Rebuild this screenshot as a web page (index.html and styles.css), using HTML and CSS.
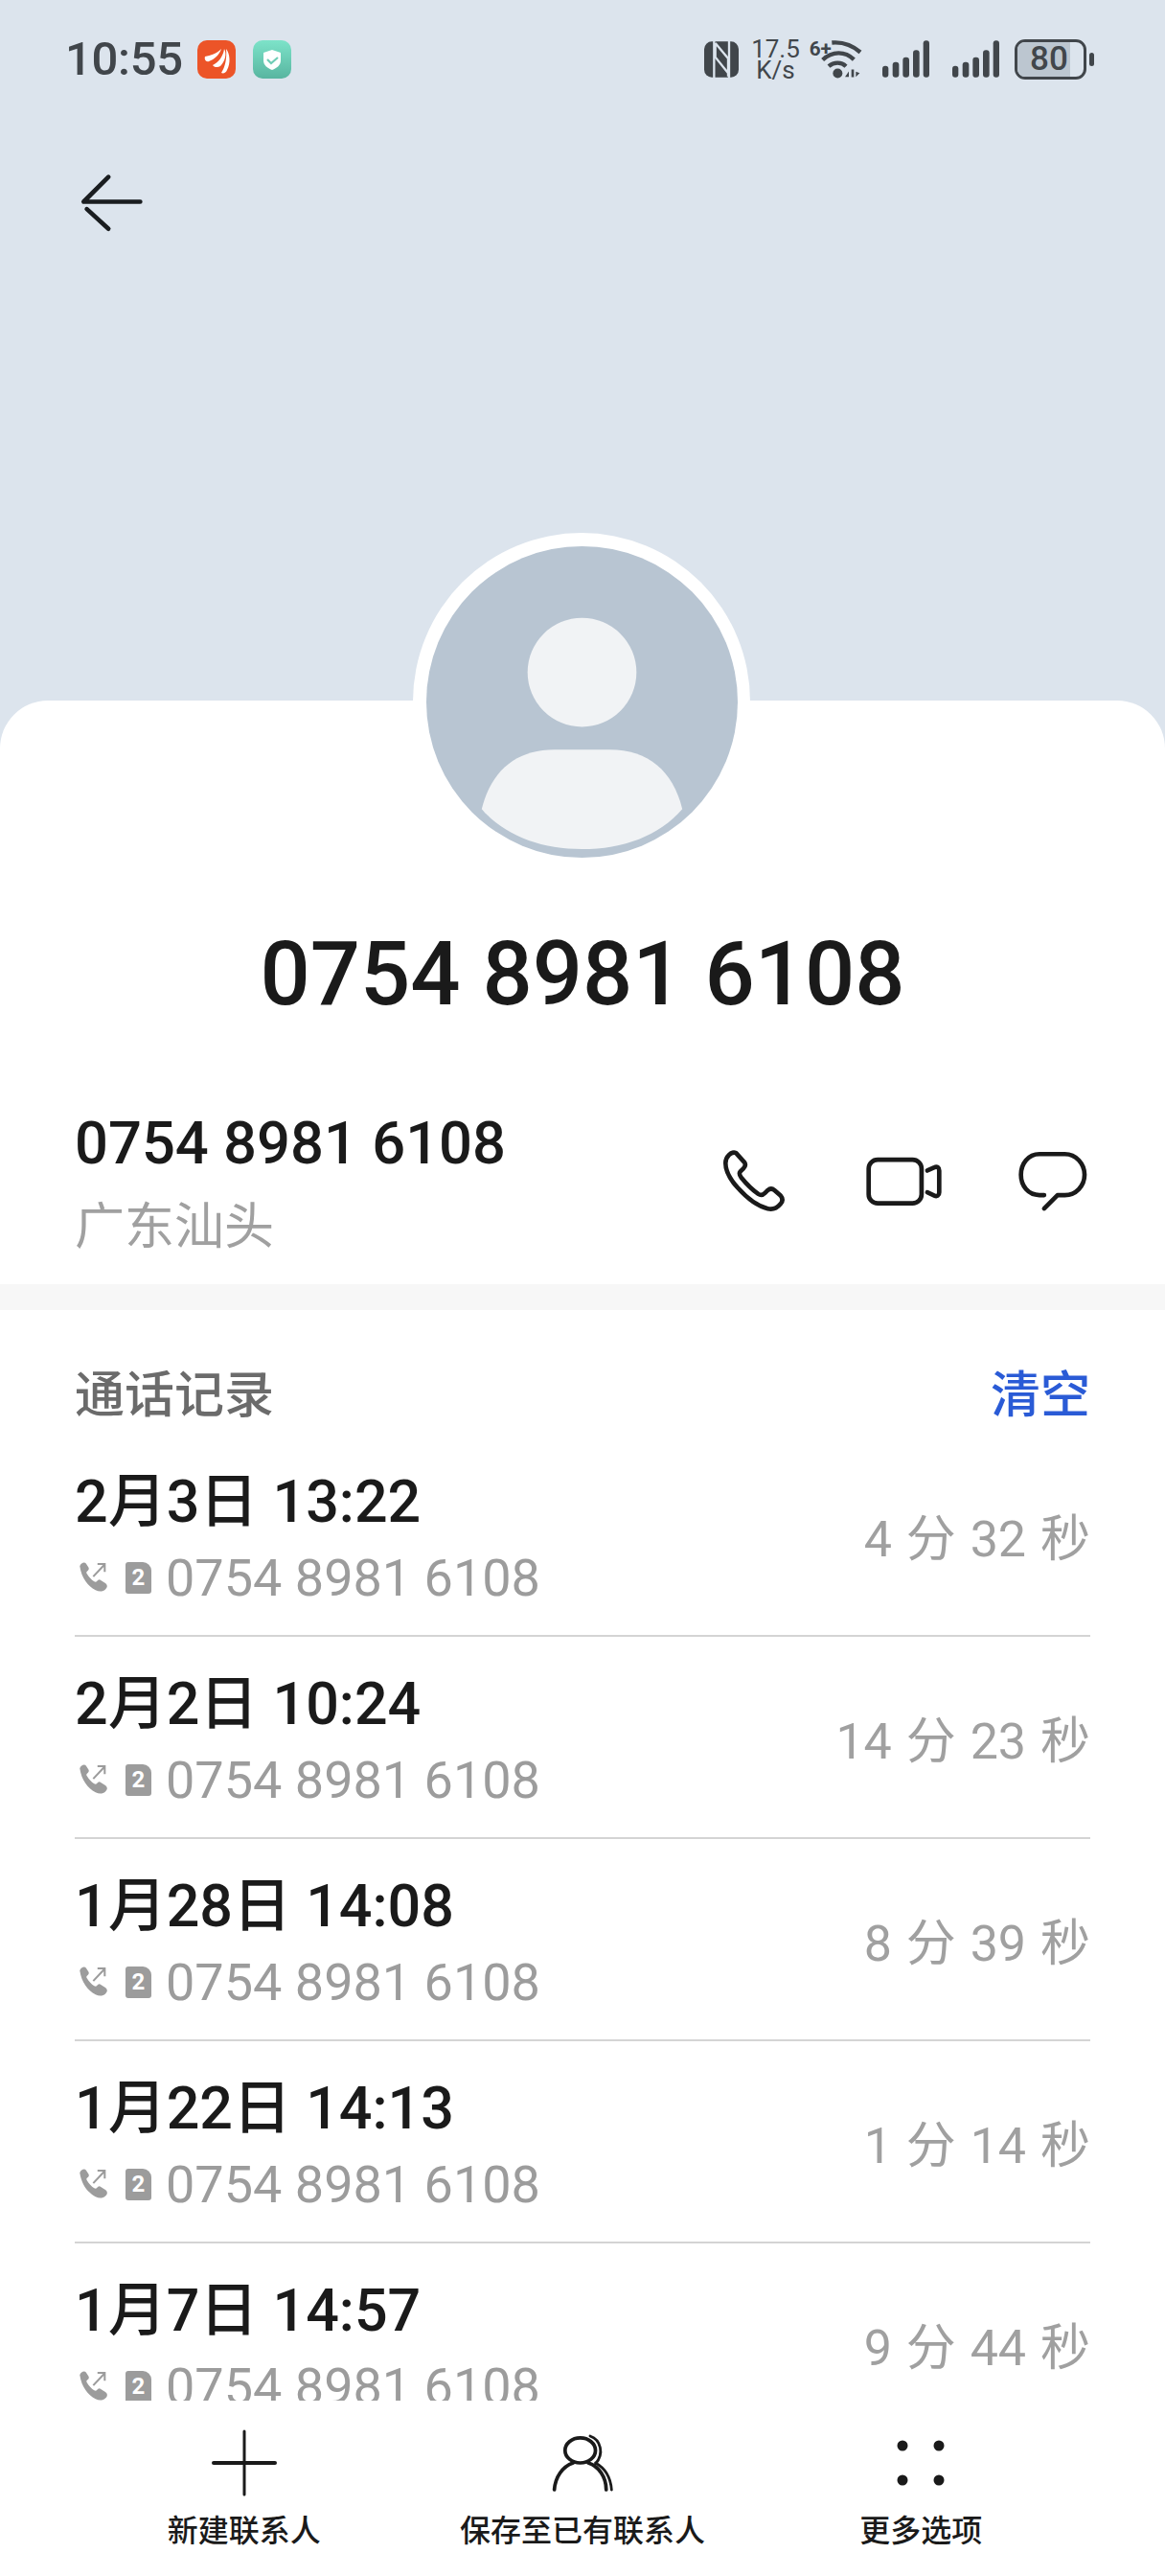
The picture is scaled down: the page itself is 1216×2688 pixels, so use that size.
FILE: index.html
```html
<!DOCTYPE html>
<html lang="zh-CN">
<head>
    <meta charset="UTF-8">
    <meta name="viewport" content="width=device-width, initial-scale=1.0">
    <title>通话详情</title>
    <link rel="stylesheet" href="styles.css">
</head>
<body>
    <svg class="defs" width="0" height="0">
        <symbol id="signal" viewBox="663 125 147 116">
            <rect x="663" y="205" width="19" height="36" rx="9"/>
            <rect x="695" y="193" width="20" height="48" rx="9"/>
            <rect x="727" y="178" width="20" height="63" rx="9"/>
            <rect x="759" y="155" width="20" height="86" rx="9"/>
            <rect x="791" y="125" width="19" height="116" rx="9"/>
        </symbol>
        <symbol id="call-out" viewBox="85 625 100 105">
            <path d="M92 640c4-10 14-13 19-8l8 13c2 4 0 8-5 11-2 2-2 5 0 8 6 10 13 18 22 23 3 2 6 2 8-1 4-5 8-6 12-3l15 10c6 5 6 12-1 18-8 7-18 8-30 2-24-13-42-36-48-73z"/>
            <path class="thin" d="M133 672l34-36M146 634h22v24"/>
        </symbol>
    </svg>

    <div class="page">
        <header class="hero">
            <div class="status-bar">
                <div class="status-left">
                    <span class="clock">10:55</span>
                    <svg class="app-icon" viewBox="0 0 40 40">
                        <rect width="40" height="40" rx="10" fill="#ec5428"/>
                        <path fill="#fff" d="M8 17c6-1 12-3 17-8-2 6-7 11-13 13-3 1-5-2-4-5z"/>
                        <path fill="#fff" d="M16 26c6-3 11-9 12-17 3 5 1 13-4 18-3 2-7 1-8-1z"/>
                        <path fill="#fff" d="M25 34c4-6 6-15 5-25 4 5 5 15 1 22-1 3-4 4-6 3z"/>
                    </svg>
                    <svg class="app-icon app-icon-second" viewBox="0 0 40 40">
                        <defs>
                            <linearGradient id="shieldBg" x1="0" y1="0" x2="0" y2="1">
                                <stop offset="0" stop-color="#7de3c9"/>
                                <stop offset="1" stop-color="#58b5a0"/>
                            </linearGradient>
                        </defs>
                        <rect width="40" height="40" rx="10" fill="url(#shieldBg)"/>
                        <path fill="#fff" d="M20 10l9 3v8c0 5-4 8-9 10-5-2-9-5-9-10v-8z"/>
                        <path fill="none" stroke="#6fcdb6" stroke-width="2.2" d="M15 20l4 4 7-6"/>
                    </svg>
                </div>
                <div class="status-right">
                    <svg class="nfc" viewBox="105 127 108 112">
                        <rect x="105" y="127" width="108" height="112" rx="24" fill="#41464b"/>
                        <path fill="none" stroke="#dce4ed" stroke-width="7" d="M136 124v118M183 124v118"/>
                        <path fill="none" stroke="#dce4ed" stroke-width="7" d="M140 132l40 48v56M140 132v44l40 50"/>
                    </svg>
                    <div class="speed"><span>17.5</span><span>K/s</span></div>
                    <svg class="wifi" viewBox="435 118 165 128">
                        <text x="434" y="172" class="wifi-gen">6+</text>
                        <path fill="none" stroke="#41464b" stroke-width="13" d="M505 131c35-3 65 9 89 30M476 185c30-28 70-28 98-1M495 205c16-14 40-14 54 0"/>
                        <circle cx="523" cy="227" r="15" fill="#41464b"/>
                        <path fill="#41464b" d="M546 238l12-17v17zM574 215v24h-8v-24zM580 222l12 4-12 12z"/>
                    </svg>
                    <svg class="signal"><use href="#signal"/></svg>
                    <svg class="signal signal-second"><use href="#signal"/></svg>
                    <div class="battery">
                        <div class="battery-body"><span class="battery-fill"></span><span class="battery-num">80</span></div>
                        <span class="battery-nub"></span>
                    </div>
                </div>
            </div>
            <svg class="back" viewBox="240 530 220 200">
                <path d="M340 552l-78 78h178M272 653l68 62"/>
            </svg>
            <div class="avatar-ring">
                <svg class="avatar" viewBox="0 0 326 326">
                    <circle cx="163" cy="163" r="163" fill="#b8c5d2"/>
                    <circle cx="163" cy="132" r="57" fill="#f1f3f5"/>
                    <path fill="#f1f3f5" d="M58 275c10-40 36-62 76-62h58c40 0 66 22 76 62-24 28-62 42-105 42s-81-14-105-42z"/>
                </svg>
            </div>
        </header>

        <main class="card">
            <h1 class="title">0754 8981 6108</h1>
            <section class="contact">
                <div class="contact-info">
                    <div class="contact-num">0754 8981 6108</div>
                    <div class="contact-place">广东汕头</div>
                </div>
                <div class="actions">
                    <svg class="act act-phone" viewBox="150 110 220 210">
                        <path d="M172 160c0-20 18-38 33-32l27 30c4 7 1 14-4 19l-10 10c-4 5-2 11 4 19 13 16 36 39 53 51 9 6 15 3 21-3l9-9c7-6 15-5 21 0l19 17c7 8 7 18 0 26-10 12-23 19-40 15-35-8-70-38-95-66-20-22-38-52-38-77z"/>
                    </svg>
                    <svg class="act act-video" viewBox="600 130 260 170">
                        <rect x="620" y="148" width="165" height="136" rx="28"/>
                        <path d="M803 182l22-10c8-4 15 0 15 10v68c0 10-7 14-15 10l-22-10"/>
                    </svg>
                    <svg class="act act-msg" viewBox="1080 120 235 200">
                        <path d="M1170 264h-15c-35 0-58-29-58-64s23-65 58-65h80c35 0 62 30 62 65s-27 64-62 64h-23l-42 42"/>
                    </svg>
                </div>
            </section>
            <div class="band"></div>
            <section class="records">
                <div class="records-head">
                    <span class="records-title">通话记录</span>
                    <span class="records-clear">清空</span>
                </div>
                <div class="row">
                    <div class="row-main">
                        <div class="row-date">2月3日 13:22</div>
                        <div class="row-sub">
                            <svg class="call-icon"><use href="#call-out"/></svg>
                            <span class="sim">2</span>
                            <span>0754 8981 6108</span>
                        </div>
                    </div>
                    <div class="row-len">4 分 32 秒</div>
                </div>
                <div class="row">
                    <div class="row-main">
                        <div class="row-date">2月2日 10:24</div>
                        <div class="row-sub">
                            <svg class="call-icon"><use href="#call-out"/></svg>
                            <span class="sim">2</span>
                            <span>0754 8981 6108</span>
                        </div>
                    </div>
                    <div class="row-len">14 分 23 秒</div>
                </div>
                <div class="row">
                    <div class="row-main">
                        <div class="row-date">1月28日 14:08</div>
                        <div class="row-sub">
                            <svg class="call-icon"><use href="#call-out"/></svg>
                            <span class="sim">2</span>
                            <span>0754 8981 6108</span>
                        </div>
                    </div>
                    <div class="row-len">8 分 39 秒</div>
                </div>
                <div class="row">
                    <div class="row-main">
                        <div class="row-date">1月22日 14:13</div>
                        <div class="row-sub">
                            <svg class="call-icon"><use href="#call-out"/></svg>
                            <span class="sim">2</span>
                            <span>0754 8981 6108</span>
                        </div>
                    </div>
                    <div class="row-len">1 分 14 秒</div>
                </div>
                <div class="row">
                    <div class="row-main">
                        <div class="row-date">1月7日 14:57</div>
                        <div class="row-sub">
                            <svg class="call-icon"><use href="#call-out"/></svg>
                            <span class="sim">2</span>
                            <span>0754 8981 6108</span>
                        </div>
                    </div>
                    <div class="row-len">9 分 44 秒</div>
                </div>
            </section>
        </main>

        <nav class="bottom-bar">
            <div class="bottom-item">
                <svg class="bottom-icon" viewBox="0 0 70 70">
                    <path class="hair" d="M35 2v66"/>
                    <path d="M3 35h64"/>
                </svg>
                <span>新建联系人</span>
            </div>
            <div class="bottom-item">
                <svg class="bottom-icon" viewBox="570 2535 75 70">
                    <ellipse cx="605" cy="2556" rx="17" ry="14"/>
                    <path d="M576 2600c1-14 9-26 21-30M614 2570c12 4 20 16 20 30"/>
                    <path class="hair" d="M616 2540c12 4 16 20 6 31M622 2570c11 6 17 17 18 30"/>
                </svg>
                <span>保存至已有联系人</span>
            </div>
            <div class="bottom-item">
                <svg class="bottom-icon" viewBox="0 0 70 70">
                    <circle class="dot" cx="16" cy="17" r="5.5"/>
                    <circle class="dot" cx="54" cy="17" r="5.5"/>
                    <circle class="dot" cx="16" cy="53" r="5.5"/>
                    <circle class="dot" cx="54" cy="53" r="5.5"/>
                </svg>
                <span>更多选项</span>
            </div>
        </nav>
    </div>
</body>
</html>
```

FILE: styles.css
```css
* {
    margin: 0;
    padding: 0;
    box-sizing: border-box;
}

body {
    font-family: Roboto, "Noto Sans CJK SC", sans-serif;
    background: white;
    color: #1a1a1a;
}

.defs {
    position: absolute;
}

.page {
    width: 1216px;
    height: 2688px;
    display: flex;
    flex-direction: column;
    overflow: hidden;
    background: #dce4ed;
}

/* top part */
.hero {
    height: 731px;
    flex: none;
    position: relative;
    padding-top: 40px;
}

.status-bar {
    height: 43px;
    display: flex;
    justify-content: space-between;
    align-items: center;
    padding: 0 74px 0 68px;
    color: #41464b;
}

.status-left,
.status-right {
    display: flex;
    align-items: center;
}

.clock {
    font-size: 49px;
    font-weight: 500;
    width: 138px;
    letter-spacing: -0.3px;
}

.app-icon {
    width: 40px;
    height: 40px;
}

.app-icon-second {
    margin-left: 18px;
}

.nfc {
    width: 36px;
    height: 38px;
}

.speed {
    width: 51px;
    margin-left: 13px;
    display: flex;
    flex-direction: column;
    align-items: center;
    font-size: 26px;
    line-height: 22px;
}

.wifi {
    width: 55px;
    height: 43px;
    margin-left: 10px;
}

.wifi-gen {
    font-size: 62px;
    font-weight: 700;
    fill: #41464b;
}

.signal {
    width: 49px;
    height: 39px;
    margin-left: 21px;
    fill: #41464b;
}

.signal-second {
    margin-left: 24px;
}

.battery {
    margin-left: 16px;
    display: flex;
    align-items: center;
    gap: 3px;
}

.battery-body {
    width: 75px;
    height: 42px;
    border: 3px solid #41464b;
    border-radius: 11px;
    position: relative;
    overflow: hidden;
    display: flex;
    align-items: center;
    padding-left: 13px;
    font-size: 35px;
    font-weight: 500;
}

.battery-fill {
    position: absolute;
    left: 0;
    top: 0;
    bottom: 0;
    width: 55px;
    background: #bcc6d0;
}

.battery-num {
    position: relative;
}

.battery-nub {
    width: 5px;
    height: 14px;
    border-radius: 3px;
    background: #41464b;
}

.back {
    display: block;
    width: 73px;
    height: 67px;
    margin: 94px 0 0 80px;
    fill: none;
    stroke: #1a1d20;
    stroke-width: 14;
    stroke-linecap: round;
    stroke-linejoin: round;
}

.avatar-ring {
    position: absolute;
    left: 431px;
    top: 556px;
    width: 352px;
    height: 352px;
    border-radius: 50%;
    background: white;
    z-index: 1;
    display: flex;
    align-items: center;
    justify-content: center;
}

.avatar {
    width: 325px;
    height: 325px;
}

/* white card */
.card {
    flex: 1;
    min-height: 0;
    background: white;
    border-radius: 50px 50px 0 0;
    display: flex;
    flex-direction: column;
}

.title {
    margin-top: 231px;
    text-align: center;
    font-size: 92px;
    line-height: 110px;
    font-weight: 500;
    position: relative;
    z-index: 2;
}

.contact {
    height: 268px;
    flex: none;
    padding: 86px 78px 0 78px;
    display: flex;
    justify-content: space-between;
}

.contact-num {
    font-size: 61.5px;
    line-height: 70px;
    font-weight: 500;
}

.contact-place {
    margin-top: 23px;
    font-size: 52px;
    line-height: 60px;
    color: #a0a0a0;
}

.actions {
    display: flex;
    align-items: center;
    height: 70px;
    margin-top: 39px;
}

.act {
    fill: none;
    stroke: #1a1a1a;
    stroke-width: 14;
    stroke-linecap: round;
    stroke-linejoin: round;
}

.act-phone {
    width: 73px;
    height: 70px;
}

.act-video {
    width: 87px;
    height: 57px;
    margin-left: 77px;
}

.act-msg {
    width: 78px;
    height: 67px;
    margin-left: 73px;
}

.band {
    height: 27px;
    flex: none;
    background: #f7f7f7;
}

/* call list */
.records {
    flex: 1;
    min-height: 0;
    overflow: hidden;
    padding: 0 78px;
}

.records-head {
    height: 130px;
    padding-top: 60px;
    display: flex;
    justify-content: space-between;
    font-size: 52px;
    line-height: 60px;
    font-weight: 500;
    color: #6b6b6b;
}

.records-clear {
    color: #2a5bd6;
}

.row {
    height: 211px;
    border-bottom: 2px solid #d4d4d4;
    display: flex;
    justify-content: space-between;
    align-items: center;
}

.row-main {
    padding-top: 6px;
}

.row-date {
    font-size: 61px;
    line-height: 70px;
    font-weight: 500;
}

.row-sub {
    margin-top: 14px;
    display: flex;
    align-items: center;
    color: #9c9c9c;
    font-size: 54px;
    line-height: 62px;
}

.call-icon {
    width: 36px;
    height: 36px;
    margin-left: 2px;
    fill: #9c9c9c;
}

.thin {
    fill: none;
    stroke: #9c9c9c;
    stroke-width: 6;
}

.sim {
    width: 27px;
    height: 33px;
    margin: 0 15px;
    background: #9c9c9c;
    border-radius: 3px 9px 3px 3px;
    color: white;
    font-size: 24px;
    line-height: 33px;
    font-weight: 700;
    text-align: center;
}

.row-len {
    font-size: 52px;
    color: #a0a0a0;
    word-spacing: 2px;
}

/* bottom actions */
.bottom-bar {
    height: 183px;
    flex: none;
    background: white;
    display: grid;
    grid-template-columns: repeat(3, 1fr);
    padding: 30px 78px 0;
}

.bottom-item {
    display: flex;
    flex-direction: column;
    align-items: center;
    font-size: 32px;
    font-weight: 500;
    line-height: 40px;
}

.bottom-icon {
    width: 70px;
    height: 70px;
    margin-bottom: 16px;
    fill: none;
    stroke: #1a1a1a;
    stroke-width: 4;
    stroke-linecap: round;
}

.bottom-icon .hair {
    stroke-width: 3;
}

.bottom-icon .dot {
    fill: #1a1a1a;
    stroke: none;
}
```
